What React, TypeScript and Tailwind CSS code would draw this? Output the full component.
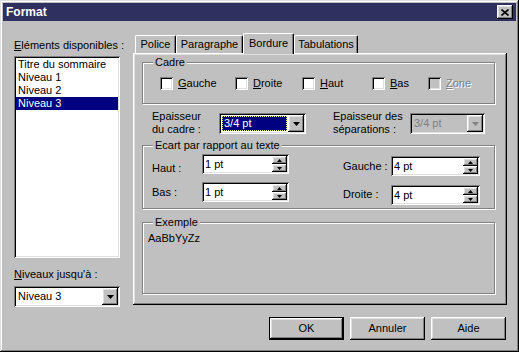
import React from "react";

const win =
  "shadow-[inset_-1px_-1px_#000,inset_1px_1px_#dfdfdf,inset_-2px_-2px_#808080,inset_2px_2px_#fff]";
const raised =
  "shadow-[inset_-1px_-1px_#000,inset_1px_1px_#fff,inset_-2px_-2px_#808080,inset_2px_2px_#dfdfdf]";
const sunken =
  "shadow-[inset_1px_1px_#808080,inset_-1px_-1px_#fff,inset_2px_2px_#000,inset_-2px_-2px_#dfdfdf]";

function Arrow({ disabled = false }: { disabled?: boolean }) {
  return (
    <svg width="7" height="4" viewBox="0 0 7 4">
      <polygon points="0,0 7,0 3.5,4" fill={disabled ? "#808080" : "#000"} />
    </svg>
  );
}

function SmallArrow({ up }: { up: boolean }) {
  return (
    <svg width="5" height="3" viewBox="0 0 5 3">
      <polygon points={up ? "2.5,0 5,3 0,3" : "0,0 5,0 2.5,3"} fill="#000" />
    </svg>
  );
}

function Combo({
  text,
  width,
  focused = false,
  disabled = false,
}: {
  text: string;
  width: string;
  focused?: boolean;
  disabled?: boolean;
}) {
  return (
    <div className={`${sunken} ${width} h-[21px] p-[2px] flex ${disabled ? "bg-[#c0c0c0]" : "bg-white"}`}>
      <div className="flex-1 flex items-center pl-[1px] pr-[1px]">
        {focused ? (
          <div className="w-full h-[15px] bg-[#000080] text-white border border-dotted border-[#ffff80] flex items-center pl-[1px]">
            {text}
          </div>
        ) : (
          <span className={disabled ? "text-[#808080] pl-[1px]" : "pl-[1px]"}>{text}</span>
        )}
      </div>
      <div className={`${raised} bg-[#c0c0c0] w-[16px] h-[17px] flex items-center justify-center`}>
        <Arrow disabled={disabled} />
      </div>
    </div>
  );
}

function Spinner({ text, width }: { text: string; width: string }) {
  return (
    <div className={`${sunken} ${width} h-[20px] p-[2px] flex bg-white`}>
      <div className="flex-1 flex items-center pl-[1px]">{text}</div>
      <div className="w-[15px] flex flex-col">
        <div className={`${raised} bg-[#c0c0c0] h-[8px] flex items-center justify-center`}>
          <SmallArrow up />
        </div>
        <div className={`${raised} bg-[#c0c0c0] h-[8px] flex items-center justify-center`}>
          <SmallArrow up={false} />
        </div>
      </div>
    </div>
  );
}

function Check({
  first,
  rest,
  width,
  disabled = false,
}: {
  first: string;
  rest: string;
  width: string;
  disabled?: boolean;
}) {
  return (
    <div className={`${width} flex items-center`}>
      <div className={`${sunken} w-[13px] h-[13px] ${disabled ? "bg-[#c0c0c0]" : "bg-white"}`} />
      <span
        className={`ml-[5px] ${disabled ? "text-[#808080] [text-shadow:1px_1px_#fff]" : ""}`}
      >
        <u>{first}</u>
        {rest}
      </span>
    </div>
  );
}

function Group({
  title,
  className,
  children,
}: {
  title: string;
  className: string;
  children?: React.ReactNode;
}) {
  return (
    <div
      className={`relative border border-[#808080] shadow-[inset_1px_1px_#fff,1px_1px_#fff] ${className}`}
    >
      <span className="absolute left-[10px] -top-[7px] px-[2px] bg-[#c0c0c0] leading-[13px] whitespace-nowrap">
        {title}
      </span>
      {children}
    </div>
  );
}

export default function App() {
  const tabs = [
    { label: "Police", w: "w-[41px]" },
    { label: "Paragraphe", w: "w-[67px]" },
    { label: "Bordure", w: "w-[51px]", active: true },
    { label: "Tabulations", w: "w-[64px]" },
  ];

  return (
    <div
      className={`${win} w-[519px] h-[352px] bg-[#c0c0c0] p-[3px] flex flex-col font-['Liberation_Sans',Arial,sans-serif] text-[11px] leading-[13px] text-black whitespace-nowrap`}
    >
      {/* Title bar */}
      <div className="h-[18px] bg-[#303060] flex items-center justify-between pl-[3px] pr-[3px]">
        <span className="text-white font-bold text-[12px]">Format</span>
        <div className={`${raised} bg-[#c0c0c0] w-[16px] h-[14px] flex items-center justify-center`}>
          <svg width="8" height="7" viewBox="0 0 8 7">
            <path d="M0.5 0.5 L7.5 6.5 M7.5 0.5 L0.5 6.5" stroke="#000" strokeWidth="1.6" />
          </svg>
        </div>
      </div>

      <div className="flex pl-[11px] mt-[12px]">
        {/* Left column */}
        <div className="w-[106px] flex flex-col pt-[6px]">
          <div className="whitespace-nowrap">
            <u>E</u>léments disponibles :
          </div>
          <div className={`${sunken} bg-white mt-[4px] h-[202px] p-[2px]`}>
            <div className="pl-[2px]">Titre du sommaire</div>
            <div className="pl-[2px]">Niveau 1</div>
            <div className="pl-[2px]">Niveau 2</div>
            <div className="pl-[2px] bg-[#000080] text-white">Niveau 3</div>
          </div>
          <div className="mt-[10px] whitespace-nowrap">
            <u>N</u>iveaux jusqu'à :
          </div>
          <div className="mt-[5px]">
            <Combo text="Niveau 3" width="w-[106px]" />
          </div>
        </div>

        {/* Tab control */}
        <div className="ml-[13px] w-[374px] flex flex-col">
          <div className="h-[20px] flex items-end pl-[2px]">
            {tabs.map((t) => (
              <div
                key={t.label}
                className={`${t.w} flex items-center justify-center border-t border-l border-white border-r border-r-black rounded-tl-[2px] rounded-tr-[2px] shadow-[inset_-1px_0_#808080] bg-[#c0c0c0] ${
                  t.active ? "h-[21px] -mb-[1px] relative z-10 pb-[2px]" : "h-[18px]"
                }`}
              >
                {t.label}
              </div>
            ))}
          </div>

          <div className={`${raised} h-[252px] pt-[9px] pl-[9px] pr-[12px] flex flex-col`}>
            <Group title="Cadre" className="h-[42px] flex items-start pl-[17px] pt-[14px]">
              <Check first="G" rest="auche" width="w-[75px]" />
              <Check first="D" rest="roite" width="w-[67px]" />
              <Check first="H" rest="aut" width="w-[70px]" />
              <Check first="B" rest="as" width="w-[56px]" />
              <Check first="Z" rest="one" width="w-[60px]" disabled />
            </Group>

            <div className="mt-[6px] flex items-start pl-[10px]">
              <div className="w-[67px]">
                Epaisseur
                <br />
                du cadre :
              </div>
              <div className="mt-[3px]">
                <Combo text="3/4 pt" width="w-[87px]" focused />
              </div>
              <div className="ml-[27px] w-[77px]">
                Epaisseur des
                <br />
                séparations :
              </div>
              <div className="mt-[3px]">
                <Combo text="3/4 pt" width="w-[75px]" disabled />
              </div>
            </div>

            <Group title="Ecart par rapport au texte" className="mt-[9px] h-[64px] pl-[9px] pt-[8px]">
              <div className="flex items-start">
                <div className="w-[50px] mt-[8px]">Haut :</div>
                <Spinner text="1 pt" width="w-[87px]" />
                <div className="ml-[54px] w-[48px] mt-[6px]">Gauche :</div>
                <div className="mt-[2px]">
                  <Spinner text="4 pt" width="w-[89px]" />
                </div>
              </div>
              <div className="flex items-start mt-[6px]">
                <div className="w-[50px] mt-[4px]">Bas :</div>
                <Spinner text="1 pt" width="w-[87px]" />
                <div className="ml-[54px] w-[48px] mt-[6px]">Droite :</div>
                <div className="mt-[3px]">
                  <Spinner text="4 pt" width="w-[89px]" />
                </div>
              </div>
            </Group>

            <Group title="Exemple" className="mt-[13px] h-[72px] pl-[5px] pt-[9px]">
              <div>AaBbYyZz</div>
            </Group>
          </div>
        </div>
      </div>

      {/* Buttons */}
      <div className="mt-[10px] flex justify-end gap-[6px] pr-[10px]">
        <div className="w-[75px] h-[23px] border border-black">
          <div className={`${raised} bg-[#c0c0c0] w-full h-full flex items-center justify-center`}>
            OK
          </div>
        </div>
        <div className={`${raised} bg-[#c0c0c0] w-[75px] h-[23px] flex items-center justify-center`}>
          Annuler
        </div>
        <div className={`${raised} bg-[#c0c0c0] w-[75px] h-[23px] flex items-center justify-center`}>
          Aide
        </div>
      </div>
    </div>
  );
}
